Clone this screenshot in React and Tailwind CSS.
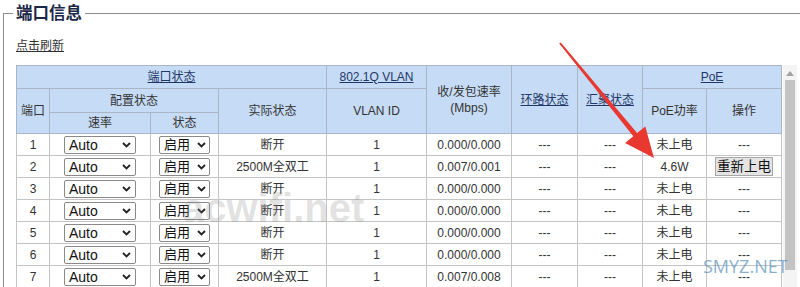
import React from "react";

const FONT = { fontFamily: '"Liberation Sans", "Noto Sans CJK SC", Arial, sans-serif' };

function Chevron() {
  return (
    <svg width="9" height="6" viewBox="0 0 9 6" className="shrink-0">
      <path d="M1 1 L4.5 4.5 L8 1" fill="none" stroke="#222" strokeWidth="1.8" />
    </svg>
  );
}

function SpeedSel() {
  return (
    <div className="mx-auto flex h-[18px] w-[72px] items-center justify-between rounded-[2px] border border-[#8a8a8a] bg-white pl-[4px] pr-[4px] text-[14px] leading-none text-[#111]">
      <span>Auto</span>
      <Chevron />
    </div>
  );
}

function StateSel() {
  return (
    <div className="mx-auto flex h-[18px] w-[51px] items-center justify-between rounded-[2px] border border-[#8a8a8a] bg-white pl-[4px] pr-[3px] text-[13px] leading-none text-[#111]">
      <span>启用</span>
      <Chevron />
    </div>
  );
}

const rows = [
  { n: 1, st: "断开", rate: "0.000/0.000", poe: "未上电", op: "---" },
  { n: 2, st: "2500M全双工", rate: "0.007/0.001", poe: "4.6W", op: "btn" },
  { n: 3, st: "断开", rate: "0.000/0.000", poe: "未上电", op: "---" },
  { n: 4, st: "断开", rate: "0.000/0.000", poe: "未上电", op: "---" },
  { n: 5, st: "断开", rate: "0.000/0.000", poe: "未上电", op: "---" },
  { n: 6, st: "断开", rate: "0.000/0.000", poe: "未上电", op: "---" },
  { n: 7, st: "2500M全双工", rate: "0.007/0.008", poe: "未上电", op: "---" },
];

const th = "border border-[#aab6c6] bg-[#c6dbf5] p-0 text-center align-middle font-normal text-[12px] text-[#333]";
const td = "border border-[#c4c4c4] p-0 text-center align-middle text-[12px] text-[#333]";
const lnk = "text-[#1f3769] underline";

export default function App() {
  return (
    <div className="relative h-[287px] w-[800px] overflow-hidden bg-white" style={FONT}>
      <fieldset className="ml-[3px] mt-[3px] w-[840px] border-l border-t border-r-0 border-b-0 border-[#8c8c8c] pl-[12px] pr-0 pb-0 pt-0">
        <legend className="-ml-[3px] px-[3px] text-[16.5px] font-bold leading-[20px] text-[#1c2747]">端口信息</legend>
        <div className="mt-[15px] text-[12px] leading-[16px] text-[#333] underline">点击刷新</div>
        <div className="mt-[11px] flex">
          <table className="w-[765px] table-fixed border-collapse">
            <colgroup>
              <col className="w-[33px]" />
              <col className="w-[101px]" />
              <col className="w-[68px]" />
              <col className="w-[108px]" />
              <col className="w-[100px]" />
              <col className="w-[85px]" />
              <col className="w-[66px]" />
              <col className="w-[65px]" />
              <col className="w-[64px]" />
              <col className="w-[75px]" />
            </colgroup>
            <thead>
              <tr className="h-[23px]">
                <th colSpan={4} className={th}><span className={lnk}>端口状态</span></th>
                <th className={th}><span className={lnk}>802.1Q VLAN</span></th>
                <th rowSpan={3} className={th}>
                  <div className="leading-[16px]">收/发包速率</div>
                  <div className="leading-[16px]">(Mbps)</div>
                </th>
                <th rowSpan={3} className={th}><span className={lnk}>环路状态</span></th>
                <th rowSpan={3} className={th}><span className={lnk}>汇聚状态</span></th>
                <th colSpan={2} className={th}><span className={lnk}>PoE</span></th>
              </tr>
              <tr className="h-[24px]">
                <th rowSpan={2} className={th}>端口</th>
                <th colSpan={2} className={th}>配置状态</th>
                <th rowSpan={2} className={th}>实际状态</th>
                <th rowSpan={2} className={th}>VLAN ID</th>
                <th rowSpan={2} className={th}>PoE功率</th>
                <th rowSpan={2} className={th}>操作</th>
              </tr>
              <tr className="h-[21px]">
                <th className={th}>速率</th>
                <th className={th}>状态</th>
              </tr>
            </thead>
            <tbody>
              {rows.map((r) => (
                <tr key={r.n} className="h-[22px]">
                  <td className={td}>{r.n}</td>
                  <td className={td}><SpeedSel /></td>
                  <td className={td}><StateSel /></td>
                  <td className={td}>{r.st}</td>
                  <td className={td}>1</td>
                  <td className={td}>{r.rate}</td>
                  <td className={td}>---</td>
                  <td className={td}>---</td>
                  <td className={td}>{r.poe}</td>
                  <td className={td}>
                    {r.op === "btn" ? (
                      <div className="mx-auto flex h-[19px] w-[58px] items-center justify-center border border-[#a8a8a8] bg-[#e4e4e4] text-[13.5px] leading-none text-[#111]">
                        重新上电
                      </div>
                    ) : (
                      "---"
                    )}
                  </td>
                </tr>
              ))}
            </tbody>
          </table>
          <div className="ml-[1px] flex w-[14px] flex-col items-center bg-[#f4f4f4]">
            <svg width="8" height="5" viewBox="0 0 8 5" className="mt-[6px]">
              <path d="M0 5 L4 0 L8 5 Z" fill="#a3a3a3" />
            </svg>
            <div className="mt-[4px] h-[190px] w-[10px] bg-[#c3c3c3]" />
          </div>
        </div>
      </fieldset>

      {/* watermarks */}
      <div className="pointer-events-none absolute left-[182px] top-[188px] text-[40px] font-bold leading-none text-[rgba(140,140,140,0.25)]" style={{ fontFamily: '"Liberation Sans", Arial, sans-serif' }}>
        acwifi.net
      </div>
      <div className="pointer-events-none absolute left-[703px] top-[257px] text-[18px] leading-none text-[rgba(95,150,190,0.75)]" style={{ fontFamily: '"Open Sans", "Liberation Sans", sans-serif' }}>
        SMYZ.NET
      </div>

      {/* red arrow */}
      <svg className="pointer-events-none absolute left-0 top-0" width="800" height="287" viewBox="0 0 800 287">
        <polygon
          points="560.8,42.4 637.1,133.1 645.3,126.5 654,158 625.1,142.9 633.3,136.3 559.2,43.6"
          fill="#e8382f"
        />
      </svg>
    </div>
  );
}
